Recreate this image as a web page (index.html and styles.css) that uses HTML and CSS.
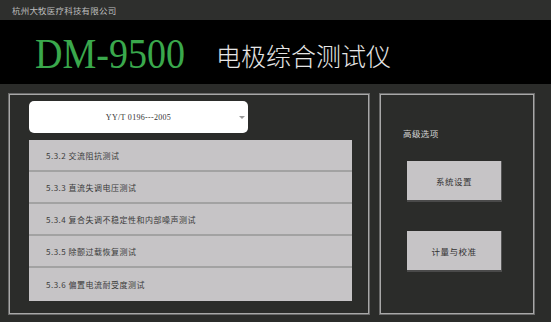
FILE: index.html
```html
<!DOCTYPE html>
<html lang="zh">
<head>
<meta charset="utf-8">
<title>DM-9500 电极综合测试仪</title>
<link rel="stylesheet" href="styles.css">
</head>
<body>
<div class="app">
  <div class="topbar">杭州大牧医疗科技有限公司</div>
  <div class="header">
    <span class="model">DM-9500</span>
    <span class="title">电极综合测试仪</span>
  </div>
  <div class="main">
    <div class="panel left">
      <div class="select">
        <span class="select-text">YY/T 0196---2005</span>
        <span class="arrow"></span>
      </div>
      <div class="list">
        <div class="item">5.3.2 交流阻抗测试</div>
        <div class="item">5.3.3 直流失调电压测试</div>
        <div class="item">5.3.4 复合失调不稳定性和内部噪声测试</div>
        <div class="item">5.3.5 除颤过载恢复测试</div>
        <div class="item last">5.3.6 偏置电流耐受度测试</div>
      </div>
    </div>
    <div class="panel right">
      <div class="label">高级选项</div>
      <div class="btn">系统设置</div>
      <div class="btn">计量与校准</div>
    </div>
  </div>
</div>
</body>
</html>
```

FILE: styles.css
```css
* { box-sizing: border-box; }
html, body { margin: 0; padding: 0; }
body {
  width: 551px;
  height: 322px;
  background: #2b2c2a;
  font-family: "Noto Sans CJK SC", "Noto Sans", sans-serif;
  overflow: hidden;
}
.app { width: 551px; height: 322px; display: flex; flex-direction: column; }
.topbar {
  height: 20px;
  background: #2e2f2d;
  color: #bdbdbd;
  font-size: 8.5px;
  line-height: 20px;
  padding-left: 12px;
  letter-spacing: 0.2px;
}
.header {
  height: 64px;
  background: #000;
  display: flex;
  align-items: center;
  padding-left: 35px;
}
.model {
  font-family: "Liberation Serif", serif;
  font-size: 43px;
  line-height: 1;
  color: #3aa84c;
  display: inline-block;
  transform: scaleX(0.885);
  transform-origin: left center;
  width: 150px;
  white-space: nowrap;
  margin-top: 2px;
}
.title {
  margin-left: 31px;
  font-size: 25px;
  color: #e6e6e6;
  font-weight: 300;
  line-height: 1;
  margin-top: 7px;
}
.main {
  display: flex;
  padding: 9px 0 0 8px;
  gap: 9px;
}
.panel {
  height: 222px;
  border: 1px solid #6a6a6a;
  box-shadow: inset 0 0 0 1px #a8a8a8;
}
.left {
  width: 362px;
  padding: 7px 0 0 20px;
}
.select {
  width: 219px;
  height: 32px;
  background: #fff;
  border-radius: 5px;
  display: flex;
  align-items: center;
  justify-content: center;
  position: relative;
}
.select-text {
  font-family: "Liberation Serif", serif;
  font-size: 8px;
  color: #333;
  letter-spacing: 0.3px;
}
.arrow {
  position: absolute;
  right: 3px;
  top: 15px;
  width: 0;
  height: 0;
  border-left: 3px solid transparent;
  border-right: 3px solid transparent;
  border-top: 3px solid #9a9a9a;
}
.list {
  margin-top: 7px;
  width: 323px;
  background: #c6c4c6;
}
.item {
  height: 32px;
  padding-left: 17px;
  display: flex;
  align-items: center;
  font-size: 8px;
  color: #3a3a3a;
  letter-spacing: 0.5px;
  border-bottom: 2px solid #a2a2a2;
}
.item.last { border-bottom: none; height: 33px; }
.right {
  width: 156px;
  padding: 33px 0 0 23px;
  display: flex;
  flex-direction: column;
}
.label {
  font-size: 8.5px;
  color: #d4d4d4;
  letter-spacing: 0.4px;
  line-height: 12px;
}
.btn {
  width: 95px;
  height: 41px;
  margin-left: 4px;
  background: #c6c4c6;
  border-right: 1px solid #555;
  border-bottom: 2px solid #4a4a4a;
  display: flex;
  align-items: center;
  justify-content: center;
  font-size: 8.5px;
  color: #333;
  letter-spacing: 0.5px;
}
.label + .btn { margin-top: 22px; }
.btn + .btn { margin-top: 29px; }
```
